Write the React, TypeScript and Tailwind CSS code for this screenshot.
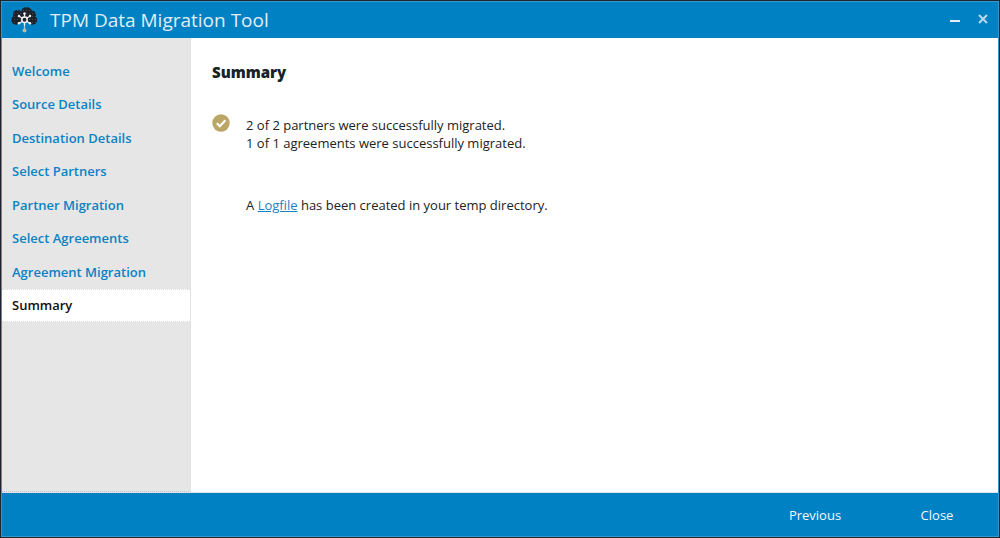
import React from "react";

const steps = [
  "Welcome",
  "Source Details",
  "Destination Details",
  "Select Partners",
  "Partner Migration",
  "Select Agreements",
  "Agreement Migration",
  "Summary",
];

function CloudLogo() {
  return (
    <svg className="h-7 w-7 shrink-0 overflow-visible" viewBox="0 0 28 28" aria-hidden="true">
      <defs>
        <pattern id="dots" width="3" height="3" patternUnits="userSpaceOnUse">
          <rect width="3" height="3" fill="#1b2229" />
          <rect x="1" y="1" width="1" height="1" fill="#414b54" />
        </pattern>
      </defs>
      <g fill="url(#dots)">
        <circle cx="6" cy="14" r="4.700" />
        <circle cx="7.500" cy="8.500" r="4.500" />
        <circle cx="16.500" cy="6.500" r="5.500" />
        <circle cx="22.500" cy="14" r="4.700" />
        <circle cx="21.500" cy="9" r="4.500" />
        <rect x="8" y="8" width="12" height="8" />
      </g>
      <path d="M14.500 17v6" stroke="#a9cbdc" strokeWidth="1.300" />
      <g stroke="#f1f3f4" strokeWidth="1.300" strokeLinecap="round">
        <path d="M14.500 8v3M14.500 16v3M9.500 10.500l2.500 1.500M19.500 10.500L17 12M9.500 17l2.500-1.500M19.500 17L17 15.500" />
      </g>
      <g fill="#f1f3f4">
        <circle cx="14.500" cy="7.500" r="1.200" />
        <circle cx="9" cy="10" r="1.200" />
        <circle cx="20" cy="10" r="1.200" />
        <circle cx="9" cy="17.300" r="1.200" />
        <circle cx="20" cy="17.300" r="1.200" />
      </g>
      <circle cx="14.500" cy="13.700" r="2.700" fill="#1b2229" stroke="#f1f3f4" strokeWidth="1.500" />
      <circle cx="14.500" cy="24.500" r="1.600" fill="#c5b98b" stroke="#d9dad3" strokeWidth=".6" />
    </svg>
  );
}

function TitleBar() {
  return (
    <header className="flex h-9 shrink-0 items-center bg-[#0081c3] pl-2">
      <CloudLogo />
      <h1 className="ml-3 flex-1 text-[19px] leading-7 whitespace-nowrap text-[#e3edf3]">
        TPM Data Migration Tool
      </h1>
      <button type="button" aria-label="Minimize" className="flex h-7 w-7 items-center justify-center">
        <svg className="h-3 w-3" viewBox="0 0 12 12" aria-hidden="true">
          <path d="M0 7h10" stroke="#e4eef4" strokeWidth="2" />
        </svg>
      </button>
      <button type="button" aria-label="Close window" className="flex h-7 w-7 items-center justify-center">
        <svg className="h-3 w-3" viewBox="0 0 12 12" aria-hidden="true">
          <path d="M1 1l8 8M9 1l-8 8" stroke="#b9d9ea" strokeWidth="2" />
        </svg>
      </button>
    </header>
  );
}

function Sidebar() {
  return (
    <aside className="w-[189px] shrink-0 border-r border-b border-dotted border-r-[#dcdcdc] border-b-[#b5c8d2] bg-[#e6e6e6] pt-4 font-semibold">
      <nav aria-label="Migration steps" className="grid h-[268px] grid-rows-8">
        {steps.map((step) => {
          const current = step === "Summary";
          return (
            <a
              key={step}
              href="#"
              aria-current={current ? "step" : undefined}
              className={
                current
                  ? "flex items-center border-y border-dotted border-[#dcdcdc] bg-white pl-2.5 text-[#101010]"
                  : "flex items-center pl-2.5 text-[#0b82c3]"
              }
            >
              {step}
            </a>
          );
        })}
      </nav>
    </aside>
  );
}

export default function App() {
  return (
    <div className="flex min-h-screen flex-col border border-[#1c252c] bg-white font-['Open_Sans','Noto_Sans',sans-serif] text-[13px] leading-[18px] text-[#222222]">
      <div className="flex flex-1 flex-col border border-[#3497cd]">
        <TitleBar />
        <div className="flex flex-1">
          <Sidebar />
          <main className="flex-1 px-[21px] pt-6">
            <h2 className="text-[15px] leading-5 font-extrabold text-[#17232a]">Summary</h2>
            <div className="mt-8 flex items-start">
              <svg className="h-[18px] w-[18px] shrink-0" viewBox="0 0 18 18" role="img" aria-label="Success">
                <circle cx="9" cy="9" r="8.700" fill="#bba665" />
                <path d="M4.800 9.200l3 3 5.600-6" fill="none" stroke="#fff" strokeWidth="2.200" />
              </svg>
              <div className="ml-4 pt-0.5">
                <p>2 of 2 partners were successfully migrated.</p>
                <p>1 of 1 agreements were successfully migrated.</p>
                <p className="mt-11">
                  A{" "}
                  <a href="#" className="text-[#1684c1] underline">
                    Logfile
                  </a>{" "}
                  has been created in your temp directory.
                </p>
              </div>
            </div>
          </main>
        </div>
        <footer className="flex h-11 shrink-0 items-center justify-end border-t border-[#dfe3e5] bg-[#0081c3] text-[#f3f8fb]">
          <button type="button" className="h-8 w-[122px]">
            Previous
          </button>
          <button type="button" className="h-8 w-[122px]">
            Close
          </button>
        </footer>
      </div>
    </div>
  );
}
